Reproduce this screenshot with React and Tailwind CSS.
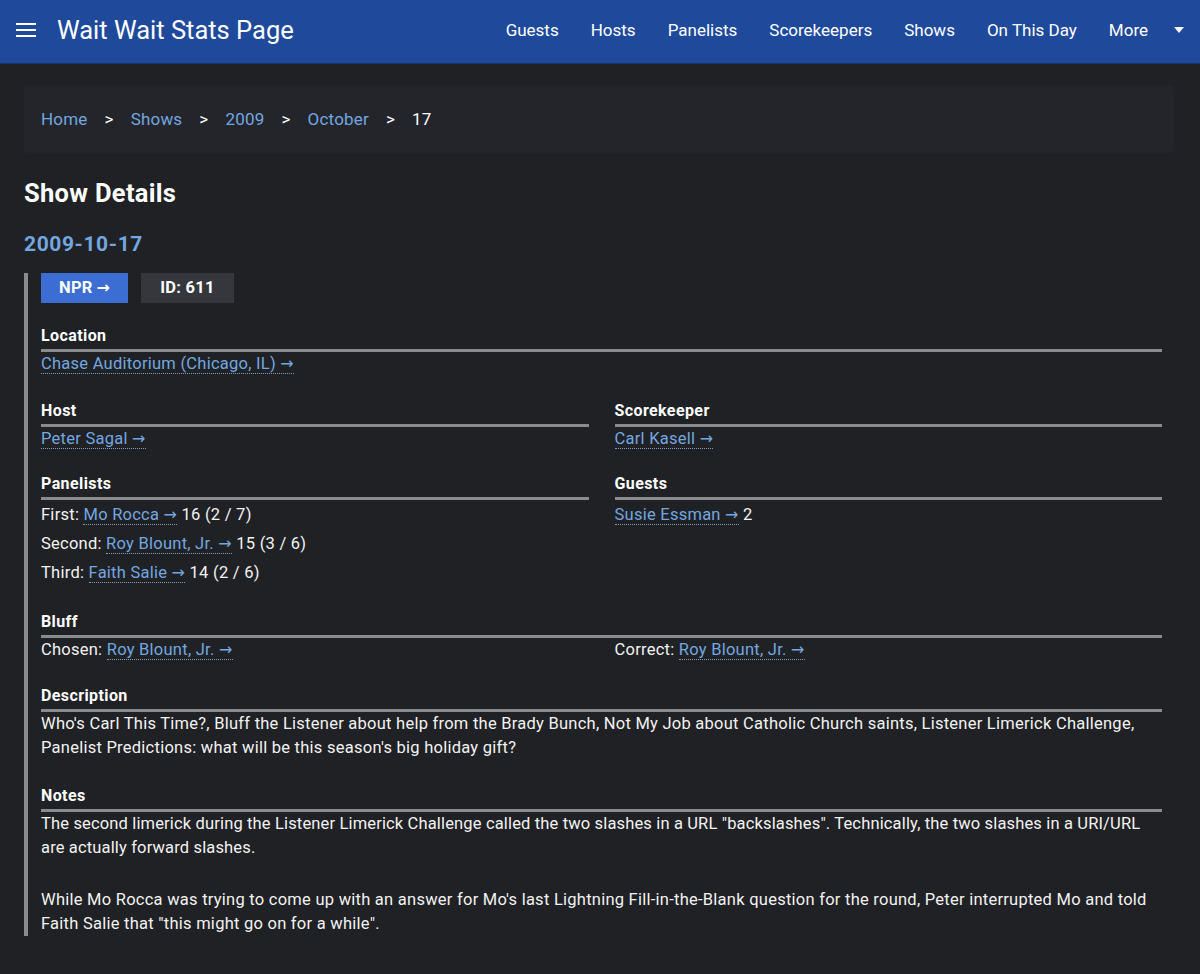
import React from 'react';

const Arrow = () => (
    <span className="text-[16px]" style={{ fontFamily: '"DejaVu Sans", sans-serif' }}>→</span>
);

const Link = ({ children }) => (
    <a href="#" className="text-[#72a7e0] border-b border-dotted border-[#7f9cbf] leading-[22px]">
        {children} <Arrow />
    </a>
);

const SectionHeader = ({ children }) => (
    <h3 className="font-bold text-[16px] leading-[24px] tracking-[0.4px] border-b-[3px] border-[#8a8b8f] pb-[1px] text-white">{children}</h3>
);

const Section = ({ title, children, className = '' }) => (
    <div className={className}>
        <SectionHeader>{title}</SectionHeader>
        <div>{children}</div>
    </div>
);

const navItems = ['Guests', 'Hosts', 'Panelists', 'Scorekeepers', 'Shows', 'On This Day'];

const App = () => {
    return (
        <div className="min-h-[974px] bg-[#202124] text-[#f2f2f2] text-[16.5px] leading-[24px] tracking-[0.25px]" style={{ fontFamily: 'Roboto, "Liberation Sans", sans-serif' }}>
            {/* Navbar */}
            <nav className="h-16 pb-1 bg-[#1f4a9c] flex items-center border-b border-[#15336b] tracking-normal">
                <button className="ml-4 w-6 h-6 flex flex-col justify-center gap-[4px]">
                    <span className="block h-[2px] w-[20px] bg-white"></span>
                    <span className="block h-[2px] w-[20px] bg-white"></span>
                    <span className="block h-[2px] w-[20px] bg-white"></span>
                </button>
                <span className="ml-[17px] text-[25.5px] text-white">Wait Wait Stats Page</span>
                <ul className="ml-auto mr-[16px] flex items-center text-[17px] text-white">
                    {navItems.map(item => (
                        <li key={item} className="px-4">{item}</li>
                    ))}
                    <li className="pl-4 flex items-center">
                        More
                        <svg className="ml-[26px]" width="10" height="6" viewBox="0 0 10 6"><path d="M0 0h10L5 6z" fill="white" /></svg>
                    </li>
                </ul>
            </nav>

            <main className="px-6 pt-[21px] pb-9">
                {/* Breadcrumb */}
                <div className="bg-[#24252a] rounded-sm h-[68px] px-[17px] mr-[2px] flex items-center text-[17px] tracking-[0.2px]">
                    <a href="#" className="text-[#72a7e0]">Home</a>
                    <span className="mx-[17px] text-white">&gt;</span>
                    <a href="#" className="text-[#72a7e0]">Shows</a>
                    <span className="mx-[17px] text-white">&gt;</span>
                    <a href="#" className="text-[#72a7e0]">2009</a>
                    <span className="mx-[17px] text-white">&gt;</span>
                    <a href="#" className="text-[#72a7e0]">October</a>
                    <span className="mx-[17px] text-white">&gt;</span>
                    <span className="text-white">17</span>
                </div>

                <h1 className="mt-[24px] text-[25.5px] leading-[32px] tracking-[0.3px] font-bold text-white">Show Details</h1>
                <h2 className="mt-[21px] text-[21px] leading-[28px] tracking-[0.6px] font-bold text-[#72a7e0]">2009-10-17</h2>

                <div className="mt-[15px] border-l-4 border-[#8a8b8f] pl-[13px] mr-[14px]">
                    <div className="flex gap-[13px]">
                        <a href="#" className="bg-[#3b6dd3] text-white font-bold px-[18px] h-[30px] flex items-center">NPR <span className="ml-1"><Arrow /></span></a>
                        <span className="bg-[#36373c] text-white font-bold px-[19px] h-[30px] flex items-center">ID: 611</span>
                    </div>

                    <Section title="Location" className="mt-[21px]">
                        <Link>Chase Auditorium (Chicago, IL)</Link>
                    </Section>

                    <div className="mt-[23px] grid grid-cols-2 gap-x-[26px]">
                        <Section title="Host">
                            <Link>Peter Sagal</Link>
                        </Section>
                        <Section title="Scorekeeper">
                            <Link>Carl Kasell</Link>
                        </Section>
                        <Section title="Panelists" className="mt-[21px]">
                            <ul className="mt-[3px] space-y-[5px]">
                                <li>First: <Link>Mo Rocca</Link> 16 (2 / 7)</li>
                                <li>Second: <Link>Roy Blount, Jr.</Link> 15 (3 / 6)</li>
                                <li>Third: <Link>Faith Salie</Link> 14 (2 / 6)</li>
                            </ul>
                        </Section>
                        <Section title="Guests" className="mt-[21px]">
                            <ul className="mt-[3px]">
                                <li><Link>Susie Essman</Link> 2</li>
                            </ul>
                        </Section>
                    </div>

                    <Section title="Bluff" className="mt-[25px]">
                        <div className="grid grid-cols-2 gap-x-[26px]">
                            <div>Chosen: <Link>Roy Blount, Jr.</Link></div>
                            <div>Correct: <Link>Roy Blount, Jr.</Link></div>
                        </div>
                    </Section>

                    <Section title="Description" className="mt-[22px]">
                        <p>Who's Carl This Time?, Bluff the Listener about help from the Brady Bunch, Not My Job about Catholic Church saints, Listener Limerick Challenge, Panelist Predictions: what will be this season's big holiday gift?</p>
                    </Section>

                    <Section title="Notes" className="mt-[24px]">
                        <p className="tracking-[0.15px]">The second limerick during the Listener Limerick Challenge called the two slashes in a URL "backslashes". Technically, the two slashes in a URI/URL are actually forward slashes.</p>
                        <p className="mt-[28px]">While Mo Rocca was trying to come up with an answer for Mo's last Lightning Fill-in-the-Blank question for the round, Peter interrupted Mo and told Faith Salie that "this might go on for a while".</p>
                    </Section>
                </div>
            </main>
        </div>
    );
};

export default App;
